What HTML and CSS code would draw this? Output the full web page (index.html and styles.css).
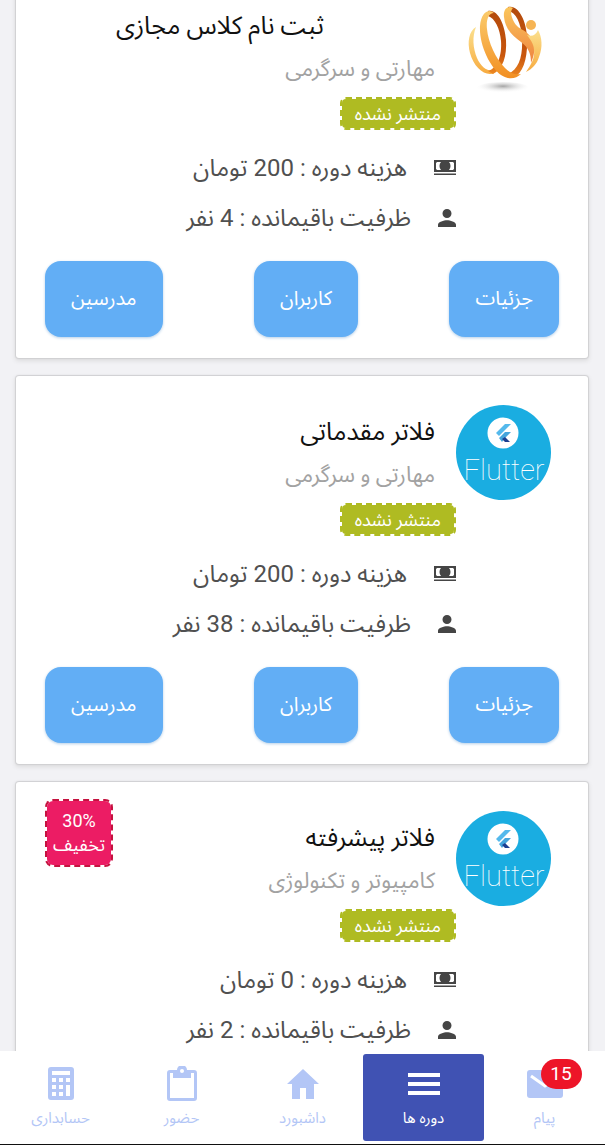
FILE: index.html
```html
<!DOCTYPE html>
<html lang="fa" dir="rtl">
<head>
<meta charset="utf-8">
<meta name="viewport" content="width=device-width, initial-scale=1">
<title>دوره ها</title>
<link rel="stylesheet" href="styles.css">
</head>
<body>
<svg class="defs" aria-hidden="true">
  <defs>
    <linearGradient id="gold" x1="0" y1="0" x2="0" y2="1"><stop offset="0" stop-color="#fbcb6c"/><stop offset="1" stop-color="#f28f22"/></linearGradient>
    <linearGradient id="swoosh" x1="0" y1="0" x2="0" y2="1"><stop offset="0" stop-color="#fbc65c"/><stop offset="1" stop-color="#ee8340"/></linearGradient>
    <linearGradient id="pale" x1="0" y1="0" x2="0" y2="1"><stop offset="0" stop-color="#fbe08e"/><stop offset="1" stop-color="#f7ab40"/></linearGradient>
    <linearGradient id="rust" x1="0" y1="0" x2="0" y2="1"><stop offset="0" stop-color="#b34a0c"/><stop offset=".7" stop-color="#c9560d"/><stop offset="1" stop-color="#ee8a22"/></linearGradient>
    <radialGradient id="shade" cx=".5" cy=".35" r=".55"><stop offset="0" stop-color="#a4a4a4"/><stop offset="1" stop-color="#fff" stop-opacity="0"/></radialGradient>
    <symbol id="cash" viewBox="0 0 22 16"><path fill="currentColor" fill-rule="evenodd" d="M0 0h22v12H0zM3 2a2 2 0 0 1-1 1v6a2 2 0 0 1 1 1h4a6 6 0 0 1 0-8zM15 2a6 6 0 0 1 0 8h4a2 2 0 0 1 1-1V3a2 2 0 0 1-1-1zM0 13.500h22V15H0z"/></symbol>
    <symbol id="person" viewBox="4 4 16 16"><path fill="currentColor" d="M12 12a4 4 0 1 0 0-8 4 4 0 0 0 0 8zm0 2c-2.670 0-8 1.340-8 4v2h16v-2c0-2.660-5.330-4-8-4z"/></symbol>
    <symbol id="flutter" viewBox="0 0 95 95">
      <circle cx="47.500" cy="47.500" r="47.500" fill="#1aade1"/>
      <circle cx="47" cy="28" r="15.500" fill="#fff"/>
      <path fill="#54b9ec" d="M49 19h6L43 31l-3-3z"/>
      <path fill="#45a5dc" d="M55 27h-6l-6 6 3 4 3-4z"/>
      <path fill="#1c3f91" d="M46 34l3-2 5 5h-5z"/>
    </symbol>
  </defs>
</svg>
<div class="app">
  <main class="feed">
    <div class="list">
      <article class="card">
        <header class="head">
          <svg class="avatar" viewBox="0 0 95 95" role="img" aria-label="لوگو">
            <ellipse cx="47" cy="89" rx="26" ry="6" fill="url(#shade)"/>
            <path fill="url(#pale)" d="M20 28C13 32 11 43 14 54c3 12 12 21 20 21 4 0 6-2 7-4-9 3-16-3-20-12-4-10-5-21-1-31z"/>
            <path fill="url(#rust)" d="M32 12c10-2 17 14 18 29 1 16-3 29-13 34l-5-3c10-3 14-16 13-30-1-12-6-23-13-25z"/>
            <path fill="url(#rust)" d="M52 8c10-3 18 13 19 29 1 21-3 37-14 42l-6-4c12-4 16-18 15-36-1-15-6-26-14-27z"/>
            <path fill="url(#gold)" d="M38 14c-5-5-13-1-14 13-1 19 10 41 21 49 7 5 15 4 20-1-6 1-11-1-16-6-9-9-17-26-18-39-1-8 1-16 7-16z"/>
            <path fill="url(#swoosh)" d="M57 9c-5-3-10 1-9 9 1 11 8 19 17 25 8 6 10 12 10 21 6-14 4-24-5-31-6-4-10-5-13-12-2-5-3-9 0-12z"/>
            <path fill="url(#pale)" d="M82 31c4 7 5 17 1 27-2 7-7 12-13 15 5-7 9-14 8-22 0-6-4-11-7-15 5 2 9 0 11-5z"/>
            <circle cx="75" cy="26" r="5" fill="#f6b454"/>
          </svg>
          <div class="info">
            <h2 class="title indented">ثبت نام کلاس مجازی</h2>
            <p class="category">مهارتی و سرگرمی</p>
            <span class="status">منتشر نشده</span>
            <p class="fact"><svg class="cash"><use href="#cash"/></svg>هزینه دوره : 200 تومان</p>
            <p class="fact"><svg class="person"><use href="#person"/></svg>ظرفیت باقیمانده : 4 نفر</p>
          </div>
        </header>
        <div class="actions"><button>جزئیات</button><button>کاربران</button><button>مدرسین</button></div>
      </article>

      <article class="card">
        <header class="head">
          <svg class="avatar" viewBox="0 0 95 95"><use href="#flutter"/><text class="logo-text" x="48" y="75" text-anchor="middle">Flutter</text></svg>
          <div class="info">
            <h2 class="title">فلاتر مقدماتی</h2>
            <p class="category">مهارتی و سرگرمی</p>
            <span class="status">منتشر نشده</span>
            <p class="fact"><svg class="cash"><use href="#cash"/></svg>هزینه دوره : 200 تومان</p>
            <p class="fact"><svg class="person"><use href="#person"/></svg>ظرفیت باقیمانده : 38 نفر</p>
          </div>
        </header>
        <div class="actions"><button>جزئیات</button><button>کاربران</button><button>مدرسین</button></div>
      </article>

      <article class="card">
        <div class="discount"><span dir="ltr">30%</span><span>تخفیف</span></div>
        <header class="head">
          <svg class="avatar" viewBox="0 0 95 95"><use href="#flutter"/><text class="logo-text" x="48" y="75" text-anchor="middle">Flutter</text></svg>
          <div class="info">
            <h2 class="title">فلاتر پیشرفته</h2>
            <p class="category">کامپیوتر و تکنولوژی</p>
            <span class="status">منتشر نشده</span>
            <p class="fact"><svg class="cash"><use href="#cash"/></svg>هزینه دوره : 0 تومان</p>
            <p class="fact"><svg class="person"><use href="#person"/></svg>ظرفیت باقیمانده : 2 نفر</p>
          </div>
        </header>
      </article>
    </div>
  </main>

  <nav class="tabs">
    <a class="tab" href="#messages">
      <span class="icon-wrap"><svg class="tab-icon" viewBox="0 0 36 36"><path fill="currentColor" d="M3 4h30a3 3 0 0 1 3 3v22a3 3 0 0 1-3 3H3a3 3 0 0 1-3-3V7a3 3 0 0 1 3-3z"/><path d="M4 10l14 10 14-10" fill="none" stroke="#fff" stroke-width="3"/></svg><span class="count">15</span></span>
      <span>پیام</span>
    </a>
    <a class="tab active" href="#courses" aria-current="page">
      <svg class="tab-icon" viewBox="0 0 36 36"><path fill="currentColor" d="M2 7h32v4H2zM2 16h32v4H2zM2 25h32v4H2z"/></svg>
      <span>دوره ها</span>
    </a>
    <a class="tab" href="#dashboard">
      <svg class="tab-icon" viewBox="0 0 36 36"><path fill="currentColor" d="M18 3l16 15h-5v15h-8V22h-6v11H7V18H2z"/></svg>
      <span>داشبورد</span>
    </a>
    <a class="tab" href="#attendance">
      <svg class="tab-icon" viewBox="0 0 36 36"><path fill="currentColor" fill-rule="evenodd" d="M6 4h7a5 5 0 0 1 10 0h7a3 3 0 0 1 3 3v25a3 3 0 0 1-3 3H6a3 3 0 0 1-3-3V7a3 3 0 0 1 3-3zm0 3v25h24V7h-3v5H9V7zM18 3a2 2 0 1 0 0 4 2 2 0 0 0 0-4z"/></svg>
      <span>حضور</span>
    </a>
    <a class="tab" href="#accounting">
      <svg class="tab-icon" viewBox="0 0 36 36"><path fill="currentColor" fill-rule="evenodd" d="M8 1h20a3 3 0 0 1 3 3v27a3 3 0 0 1-3 3H8a3 3 0 0 1-3-3V4a3 3 0 0 1 3-3zm1 4v4h18V5zM9 12v4h4v-4zm7 0v4h4v-4zm7 0v4h4v-4zM9 19v4h4v-4zm7 0v4h4v-4zm7 0v11h4V19zM9 26v4h4v-4zm7 0v4h4v-4z"/></svg>
      <span>حسابداری</span>
    </a>
  </nav>
</div>
</body>
</html>
```
FILE: styles.css
```css
* { box-sizing: border-box; }
body {
  margin: 0;
  background: #f2f2f5;
  font-family: Roboto, "Noto Sans Arabic", Vazirmatn, "DejaVu Sans", sans-serif;
  color: #505050;
}
h2, p { margin: 0; font-weight: 400; }
.defs { position: absolute; width: 0; height: 0; }
.app { height: 100vh; display: flex; flex-direction: column; overflow: hidden; }
.feed { flex: 1; min-height: 0; overflow: hidden; }

/* The list is shown part-way scrolled. */
.list { display: flex; flex-direction: column; gap: 18px; margin-top: -30px; padding: 0 17px 0 16px; }
.card {
  position: relative;
  flex: none;
  padding: 29px 29px 21px;
  background: #fff;
  border-radius: 3px;
  box-shadow: 0 0 1px 1px #d0d0d2, 0 2px 4px 1px #dcdcde;
}
.head { display: flex; padding-right: 8px; }
.avatar { flex: none; width: 95px; height: 95px; }
.logo-text { font: 100 29px Roboto, sans-serif; fill: #fff; direction: ltr; }
.info { flex: 1; min-width: 0; padding-top: 6px; }
.title { padding-right: 21px; font-size: 25px; line-height: 42px; color: #111; white-space: nowrap; }
.title.indented { padding-right: 132px; }
.category { padding-right: 21px; font-size: 22px; line-height: 44px; color: #a2a2a2; }
.status {
  display: block;
  width: max-content;
  margin: 6px 0 13px;
  padding: 0 13px;
  border: 2px dashed #afbb22;
  border-radius: 6px;
  background: #afbb22;
  background-clip: padding-box;
  color: #fff;
  font-size: 18px;
  line-height: 29px;
}
.fact { display: flex; align-items: center; gap: 27px; height: 50px; font-size: 24px; white-space: nowrap; }
.cash { width: 22px; height: 16px; color: #454545; }
.person { width: 18px; height: 18px; color: #454545; }
.actions { display: flex; justify-content: space-between; margin-top: 18px; }
.actions button {
  height: 76px;
  padding: 0 26px;
  border: 0;
  border-radius: 16px;
  background: #62aef5;
  box-shadow: 0 1px 3px #b5cfe8;
  color: #fff;
  font: 400 20px Roboto, "Noto Sans Arabic", Vazirmatn, "DejaVu Sans", sans-serif;
}
.discount {
  position: absolute;
  left: 29px;
  top: 17px;
  display: flex;
  flex-direction: column;
  align-items: center;
  width: 68px;
  padding: 8px 0;
  border: 2px dashed #c5123f;
  border-radius: 8px;
  background: #ec1c64;
  background-clip: padding-box;
  color: #fff;
  font-size: 18px;
  line-height: 24px;
}
.tabs {
  flex: none;
  display: grid;
  grid-template-columns: repeat(5, 1fr);
  height: 94px;
  padding: 3px 0;
  background: #fff;
  border-bottom: 1px solid #111;
}
.tab {
  display: flex;
  flex-direction: column;
  align-items: center;
  padding-top: 12px;
  border-radius: 3px;
  color: #b3c6f6;
  font-size: 15px;
  line-height: 32px;
  text-decoration: none;
}
.tab.active { background: #4052b3; color: #fff; }
.tab-icon { display: block; width: 36px; height: 36px; }
.icon-wrap { position: relative; }
.count {
  position: absolute;
  left: 14px;
  top: -7px;
  width: 41px;
  border-radius: 15px;
  background: #ed1528;
  color: #fff;
  font-size: 19px;
  line-height: 30px;
  text-align: center;
}
```
